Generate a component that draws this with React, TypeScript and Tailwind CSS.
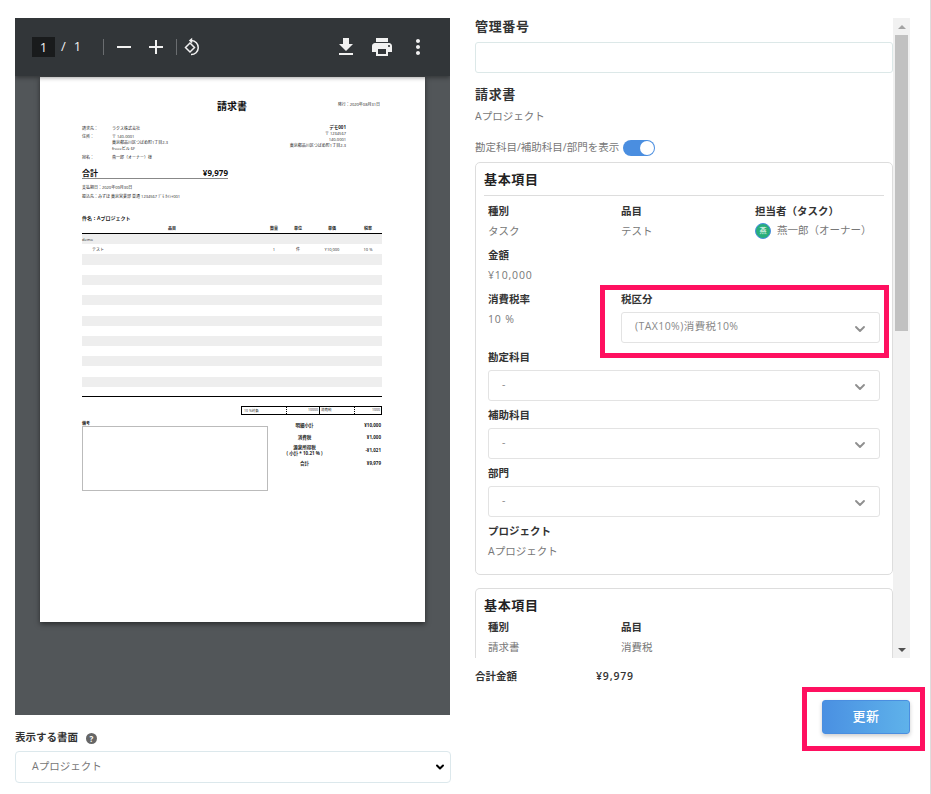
import type { ReactNode } from 'react'
import { ChevronDown } from 'lucide-react'

const LIST_ROWS = [0, 1, 2, 3, 4, 5, 6, 7, 8, 9, 10, 11, 12, 13, 14, 15]

const TOTALS = [
  { label: '明細小計', value: '¥10,000', h: 'h-[12px]' },
  { label: '消費税', value: '¥1,000', h: 'h-[12px]' },
  { label: '源泉所得税\n( 小計 * 10.21 % )', value: '-¥1,021', h: 'h-[14px]' },
  { label: '合計', value: '¥9,979', h: 'h-[12px]' },
]

function Field({ label, children, className = '' }: { label: string; children: ReactNode; className?: string }) {
  return (
    <div className={className}>
      <div className="h-[14px] text-[10.5px] leading-[14px] font-semibold text-[#333]">{label}</div>
      {children}
    </div>
  )
}

function Value({ children, wide }: { children: ReactNode; wide?: boolean }) {
  return (
    <div className={`mt-[4px] h-[18px] text-[10.5px] leading-[18px] text-[#777] ${wide ? 'tracking-[0.08em]' : ''}`}>
      {children}
    </div>
  )
}

function FakeSelect({ value }: { value: string }) {
  return (
    <div className="mt-[6px] h-[31px] rounded-[3px] border border-[#e3e3e3] bg-white pl-[13px] pr-[11px] flex items-center justify-between text-[10.5px] tracking-[0.04em] text-[#888]">
      <span className="-mt-[2px]">{value}</span>
      <ChevronDown className="mt-[3px] w-[16px] h-[16px] text-[#8f8f8f]" strokeWidth={2.8} />
    </div>
  )
}

function PdfToolbar() {
  return (
    <div className="relative z-10 h-[58px] shrink-0 bg-[#323639] shadow-[0_2px_4px_rgba(0,0,0,0.35)] flex items-center pl-[17px] pr-[20px] text-[#f1f1f1]">
      <div className="w-[23px] h-[20px] bg-[#191b1c] text-[13px] leading-[20px] text-center">1</div>
      <span className="ml-[6px] text-[13px]">/</span>
      <span className="ml-[8px] w-[10px] text-[13px]">1</span>
      <div className="ml-[19px] w-px h-[16px] bg-[#6a6d70]" />
      <svg viewBox="0 0 14 14" className="ml-[13px] w-[14px] h-[14px]" fill="currentColor">
        <rect x="0" y="6" width="14" height="2" />
      </svg>
      <svg viewBox="0 0 14 14" className="ml-[18px] w-[14px] h-[14px]" fill="currentColor">
        <rect x="0" y="6" width="14" height="2" />
        <rect x="6" y="0" width="2" height="14" />
      </svg>
      <div className="ml-[13px] w-px h-[16px] bg-[#6a6d70]" />
      <svg viewBox="0 0 20 20" className="ml-[6px] w-[20px] h-[20px]" fill="none" stroke="currentColor" strokeWidth="1.5">
        <path d="M7 6 11.5 10.5 7 15 2.5 10.5Z" />
        <path d="M8.5 3.6a7 7 0 1 1-.5 14" />
        <path d="M9.2 0.8 5.8 3.6 9.2 6.4Z" fill="currentColor" stroke="none" />
      </svg>
      <div className="flex-1" />
      <svg viewBox="0 0 24 24" className="w-[24px] h-[24px]" fill="currentColor">
        <path d="M19 9h-4V3H9v6H5l7 7 7-7zM5 18v2h14v-2H5z" />
      </svg>
      <svg viewBox="0 0 24 24" className="ml-[12px] w-[24px] h-[24px]" fill="currentColor">
        <path d="M19 8H5c-1.66 0-3 1.34-3 3v6h4v4h12v-4h4v-6c0-1.66-1.34-3-3-3zm-3 11H8v-5h8v5zm3-7c-.55 0-1-.45-1-1s.45-1 1-1 1 .45 1 1-.45 1-1 1zm-1-9H6v4h12V3z" />
      </svg>
      <svg viewBox="0 0 24 24" className="ml-[12px] w-[24px] h-[24px]" fill="currentColor">
        <path d="M12 8c1.1 0 2-.9 2-2s-.9-2-2-2-2 .9-2 2 .9 2 2 2zm0 2c-1.1 0-2 .9-2 2s.9 2 2 2 2-.9 2-2-.9-2-2-2zm0 6c-1.1 0-2 .9-2 2s.9 2 2 2 2-.9 2-2-.9-2-2-2z" />
      </svg>
    </div>
  )
}

function InvoicePage() {
  return (
    <div className="w-[385px] h-[545px] mx-auto bg-white shadow-[0_2px_5px_rgba(0,0,0,0.5)] pl-[42px] pr-[43px] pt-[22px] text-[4px] leading-[5px] text-[#222]">
      <div className="relative flex justify-center h-[14px]">
        <span className="text-[10px] leading-[14px] font-bold text-[#111]">請求書</span>
        <span className="absolute right-[2px] top-[3px]">発行：2020年08月31日</span>
      </div>

      <div className="mt-[12px] flex">
        <div className="w-[146px] pt-[1px]">
          <div className="flex h-[8px]"><span className="w-[30px]">請求先：</span><span>ラクス株式会社</span></div>
          <div className="flex"><span className="w-[30px]">住所：</span><span className="leading-[6px]">〒 140-0001<br />東京都品川区つばめ町1丁目2-3<br />freeeビル 6F</span></div>
          <div className="flex mt-[3px]"><span className="w-[30px]">宛名：</span><span>燕一郎（オーナー）様</span></div>
        </div>
        <div className="w-[118px] -mt-[1px] text-right leading-[6px]">
          <div className="font-bold text-[4.5px] leading-[7px]">デモ001</div>
          <div>〒 1234567</div>
          <div>140-0001</div>
          <div>東京都品川区つばめ町1丁目2-3</div>
        </div>
      </div>

      <div className="mt-[7px] w-[146px] h-[12px] border-b border-[#888] flex items-end justify-between text-[8px] leading-[11px] font-bold text-[#111]">
        <span>合計</span>
        <span>¥9,979</span>
      </div>
      <div className="mt-[6px]">支払期日：2020年09月30日</div>
      <div className="mt-[4px]">振込先：みずほ 東京営業部 普通 1234567 ﾃﾞﾓ ｶｲｼｬ001</div>

      <div className="mt-[17px] text-[5px] font-bold">件名：Aプロジェクト</div>

      <div className="mt-[5px] flex h-[7px] font-bold text-center">
        <span className="w-[180px]">品目</span>
        <span className="w-[24px]">数量</span>
        <span className="w-[24px]">単位</span>
        <span className="w-[44px]">単価</span>
        <span className="w-[28px]">税率</span>
      </div>
      <div className="h-px bg-black" />
      {LIST_ROWS.map((i) => (
        <div key={i} className={`h-[10.2px] flex items-center text-center ${i % 2 === 0 ? 'bg-[#eee]' : 'bg-white'}`}>
          {i === 0 && <span className="text-left">demo</span>}
          {i === 1 && (
            <>
              <span className="w-[180px] text-left pl-[10px]">テスト</span>
              <span className="w-[24px]">1</span>
              <span className="w-[24px]">件</span>
              <span className="w-[44px]">¥10,000</span>
              <span className="w-[28px]">10 %</span>
            </>
          )}
        </div>
      ))}
      <div className="mt-[-1px] h-px bg-black" />

      <div className="mt-[9px] ml-[159px] w-[141px] h-[9px] border border-black flex items-center text-[3.5px]">
        <span className="w-[44px] pl-[2px]">10 %対象</span>
        <span className="w-[33px] h-full border-l border-dotted border-black text-right pr-[1px]">10000</span>
        <span className="w-[35px] h-full border-l border-black pl-[1px]">消費税</span>
        <span className="flex-1 h-full border-l border-dotted border-black text-right pr-[1px]">1000</span>
      </div>

      <div className="mt-[6px] flex">
        <div className="w-[186px]">
          <div className="font-bold h-[5px] leading-[5px]">備考</div>
          <div className="h-[65px] border border-[#bbb]" />
        </div>
        <div className="ml-[8px] -mt-[2px] flex-1 font-bold text-[4.5px] leading-[6px]">
          {TOTALS.map((t) => (
            <div key={t.label} className={`${t.h} flex items-center`}>
              <span className="w-[57px] text-center whitespace-pre-line">{t.label}</span>
              <span className="flex-1 text-right pr-[1px]">{t.value}</span>
            </div>
          ))}
        </div>
      </div>
    </div>
  )
}

function ScrollBar() {
  return (
    <div className="w-[17px] shrink-0 bg-[#f1f1f1] flex flex-col items-center">
      <div className="h-[17px] flex items-center justify-center">
        <div className="border-x-[4px] border-x-transparent border-b-[4px] border-b-[#a3a3a3]" />
      </div>
      <div className="w-[13px] h-[296px] bg-[#c1c1c1]" />
      <div className="flex-1" />
      <div className="h-[17px] flex items-center justify-center">
        <div className="border-x-[4px] border-x-transparent border-t-[4px] border-t-[#505050]" />
      </div>
    </div>
  )
}

export default function App() {
  return (
    <div className="w-[931px] h-[794px] overflow-hidden bg-white border-r border-[#ddd] pl-[15px] pt-[18px] flex [font-family:'Open_Sans','Noto_Sans_CJK_JP',sans-serif]">
      <div className="w-[436px] shrink-0">
        <div className="w-[435px] h-[697px] bg-[#525659] flex flex-col overflow-hidden">
          <PdfToolbar />
          <div className="pt-px">
            <InvoicePage />
          </div>
        </div>
        <div className="mt-[16px] flex items-center h-[14px] text-[10.5px] font-semibold text-[#333]">
          表示する書面
          <span className="ml-[8px] w-[11px] h-[11px] rounded-full bg-[#666] text-white text-[8px] leading-[11px] text-center font-bold">?</span>
        </div>
        <div className="mt-[6px] w-[436px] h-[32px] rounded-[4px] border border-[#dce8ec] bg-white pl-[16px] pr-[4px] flex items-center justify-between text-[10.5px] text-[#777]">
          Aプロジェクト
          <ChevronDown className="w-[12px] h-[12px] text-black" strokeWidth={4} />
        </div>
      </div>

      <div className="ml-[24px] w-[435px] shrink-0">
        <div className="h-[640px] flex">
          <div className="w-[418px] overflow-hidden">
            <div className="h-[16px] text-[13px] leading-[16px] font-semibold tracking-[0.05em] text-[#333]">管理番号</div>
            <div className="mt-[8px] h-[31px] rounded-[3px] border border-[#dce8e8]" />
            <div className="mt-[13px] h-[17px] text-[13px] leading-[17px] font-semibold tracking-[0.05em] text-[#333]">請求書</div>
            <div className="mt-[4px] h-[18px] text-[10.5px] leading-[18px] text-[#777]">Aプロジェクト</div>
            <div className="mt-[14px] h-[18px] flex items-center text-[10.5px] text-[#777]">
              勘定科目/補助科目/部門を表示
              <span className="ml-[4px] w-[32px] h-[16px] rounded-full bg-[#4a8ee0] flex items-center justify-end pr-[1px]">
                <span className="w-[14px] h-[14px] rounded-full bg-white" />
              </span>
            </div>

            <div className="relative mt-[5px] h-[413px] rounded-[5px] border border-[#ddd] px-[8px]">
              <div className="h-[33px] pt-[7px] border-b border-[#ddd] text-[13px] leading-[18px] font-semibold tracking-[0.05em] text-[#222]">基本項目</div>
              <div className="px-[4px] pt-[8px]">
                <div className="flex">
                  <Field label="種別" className="w-[133px]"><Value>タスク</Value></Field>
                  <Field label="品目" className="w-[134px]"><Value>テスト</Value></Field>
                  <Field label="担当者（タスク）" className="flex-1">
                    <div className="mt-[4px] h-[18px] flex items-center text-[10.5px] text-[#777] whitespace-nowrap">
                      <span className="w-[16px] h-[16px] rounded-full bg-[#27ae7a] border border-[#4a8ee0] text-white text-[7px] leading-[14px] text-center">燕</span>
                      <span className="ml-[6px]">燕一郎（オーナー）</span>
                    </div>
                  </Field>
                </div>
                <Field label="金額" className="mt-[8px]"><Value wide>¥10,000</Value></Field>
                <div className="mt-[8px] flex">
                  <Field label="消費税率" className="w-[133px]"><Value wide>10 %</Value></Field>
                  <Field label="税区分" className="flex-1"><FakeSelect value="(TAX10%)消費税10%" /></Field>
                </div>
                <Field label="勘定科目" className="mt-[7px]"><FakeSelect value="-" /></Field>
                <Field label="補助科目" className="mt-[7px]"><FakeSelect value="-" /></Field>
                <Field label="部門" className="mt-[7px]"><FakeSelect value="-" /></Field>
                <Field label="プロジェクト" className="mt-[7px]"><Value>Aプロジェクト</Value></Field>
              </div>
              <div className="absolute left-[124px] top-[122px] w-[289px] h-[73px] border-[5px] border-[#ff1060]" />
            </div>

            <div className="mt-[13px] rounded-t-[5px] border border-b-0 border-[#ddd] px-[8px] h-[80px]">
              <div className="pt-[7px] h-[30.5px] text-[13px] leading-[18px] font-semibold tracking-[0.05em] text-[#222]">基本項目</div>
              <div className="px-[4px] flex">
                <Field label="種別" className="w-[133px]"><Value>請求書</Value></Field>
                <Field label="品目"><Value>消費税</Value></Field>
              </div>
            </div>
          </div>
          <ScrollBar />
        </div>

        <div className="mt-[12px] h-[14px] flex items-center text-[10.5px] font-semibold text-[#333]">
          <span className="w-[121px]">合計金額</span>
          <span className="tracking-[0.08em]">¥9,979</span>
        </div>

        <div className="relative mt-[16px] flex justify-end">
          <button className="w-[88px] h-[34px] rounded-[3px] border border-[#4a8ee0] bg-gradient-to-r from-[#4a90e2] to-[#5fb2ea] shadow-[0_2px_4px_rgba(0,0,0,0.2)] text-white text-[13px] font-medium tracking-[0.04em]">
            更新
          </button>
          <div className="absolute left-[327px] top-[-13px] w-[123px] h-[64px] border-[5px] border-[#ff1060]" />
        </div>
      </div>
    </div>
  )
}
